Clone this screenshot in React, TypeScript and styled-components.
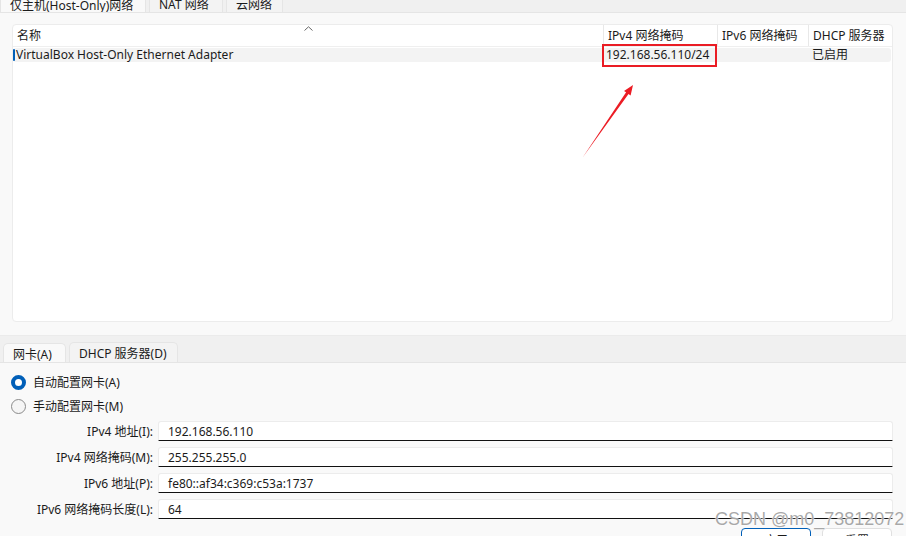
import React from "react";
import styled, { createGlobalStyle } from "styled-components";

const GlobalStyle = createGlobalStyle`
	html, body {
		margin: 0;
		padding: 0;
		background: #f0f0f0;
		overflow: hidden;
	}
`;

const UI_FONT = `"Noto Sans", "Noto Sans CJK SC", sans-serif`;
const ACCENT = "#005fb8";

const Window = styled.div`
	position: relative;
	width: 906px;
	height: 536px;
	display: flex;
	flex-direction: column;
	background: #f0f0f0;
	overflow: hidden;
	font-family: ${UI_FONT};
	font-size: 12px;
	color: #1b1b1b;
`;

const TabStrip = styled.div<{ $height: number; $pad: number }>`
	height: ${({ $height }) => $height}px;
	flex: 0 0 auto;
	display: flex;
	align-items: flex-end;
	gap: 3px;
	padding-left: ${({ $pad }) => $pad}px;
	overflow: hidden;
`;

const Tab = styled.div<{ $active?: boolean; $width: number; $height: number }>`
	box-sizing: border-box;
	width: ${({ $width }) => $width}px;
	height: ${({ $height }) => $height}px;
	display: flex;
	align-items: center;
	padding-left: 9px;
	white-space: nowrap;
	background: ${({ $active }) => ($active ? "#f9f9f9" : "#f3f3f3")};
	border: 1px solid #e5e5e5;
	border-bottom: none;
	border-radius: 5px 5px 0 0;
	margin-bottom: ${({ $active }) => ($active ? "-1px" : "0")};
	position: relative;
	z-index: ${({ $active }) => ($active ? 1 : 0)};
`;

const UpperPanel = styled.div`
	box-sizing: border-box;
	height: 324px;
	flex: 0 0 auto;
	padding: 11px 13px 13px 12px;
	background: #f9f9f9;
	border-top: 1px solid #e5e5e5;
	border-bottom: 1px solid #ebebeb;
`;

const ListBox = styled.div`
	box-sizing: border-box;
	height: 298px;
	background: #ffffff;
	border: 1px solid #ececec;
	border-radius: 4px;
	overflow: hidden;
`;

const COLS = "590px 114px 91px 1fr";

const HeaderRow = styled.div`
	display: grid;
	grid-template-columns: ${COLS};
	height: 21px;
	border-bottom: 1px solid #efefef;
`;

const HeaderCell = styled.div<{ $divider?: boolean }>`
	position: relative;
	display: flex;
	align-items: flex-end;
	padding: 0 0 2px 4px;
	border-left: ${({ $divider }) => ($divider ? "1px solid #e8e8e8" : "none")};
	white-space: nowrap;
`;

const SortArrow = styled.svg`
	position: absolute;
	top: 1px;
	left: 50%;
	margin-left: -4px;
`;

const DataRow = styled.div`
	position: relative;
	display: grid;
	grid-template-columns: ${COLS};
	height: 14px;
	margin: 1px 1px 0 0;
	background: #f3f3f3;
	border-radius: 3px;
	line-height: 14px;
`;

const RowMarker = styled.div`
	position: absolute;
	left: 0;
	top: 1px;
	width: 2px;
	height: 12px;
	border-radius: 1px;
	background: ${ACCENT};
`;

const DataCell = styled.div<{ $indent: number }>`
	padding-left: ${({ $indent }) => $indent}px;
	white-space: nowrap;
`;

const LowerPanel = styled.div`
	flex: 1 1 auto;
	box-sizing: border-box;
	padding: 7px 13px 0 11px;
	background: #f9f9f9;
	border-top: 1px solid #e5e5e5;
	display: flex;
	flex-direction: column;
`;

const RadioRow = styled.label`
	height: 24px;
	display: flex;
	align-items: center;
	gap: 7px;
`;

const RadioDot = styled.span<{ $checked?: boolean }>`
	box-sizing: border-box;
	width: 15px;
	height: 15px;
	border-radius: 50%;
	flex: 0 0 auto;
	background: ${({ $checked }) => ($checked ? "#ffffff" : "#f5f5f5")};
	border: ${({ $checked }) =>
		$checked ? `4px solid ${ACCENT}` : "1px solid #8a8a8a"};
`;

const Form = styled.div`
	margin-top: 3px;
	display: grid;
	grid-template-columns: 142px 1fr;
	column-gap: 5px;
	row-gap: 6px;
`;

const FieldLabel = styled.div`
	height: 20px;
	display: flex;
	align-items: center;
	justify-content: flex-end;
	white-space: nowrap;
`;

const FieldInput = styled.div`
	box-sizing: border-box;
	height: 20px;
	display: flex;
	align-items: center;
	padding-left: 9px;
	background: #ffffff;
	border: 1px solid #ececec;
	border-bottom: 1px solid #111111;
	border-radius: 3px 3px 0 0;
`;

const ButtonRow = styled.div`
	margin-top: 9px;
	display: flex;
	justify-content: flex-end;
	gap: 11px;
	padding-right: 1px;
`;

const Button = styled.div<{ $primary?: boolean }>`
	box-sizing: border-box;
	width: 70px;
	height: 24px;
	display: flex;
	align-items: center;
	justify-content: center;
	background: #ffffff;
	border: 1px solid ${({ $primary }) => ($primary ? ACCENT : "#e0e0e0")};
	border-radius: 4px;
`;

const Highlight = styled.div`
	position: absolute;
	left: 602px;
	top: 44px;
	width: 115px;
	height: 23px;
	box-sizing: border-box;
	border: 2px solid #ea1c24;
	pointer-events: none;
`;

const Arrow = styled.svg`
	position: absolute;
	left: 570px;
	top: 80px;
`;

const Watermark = styled.div`
	position: absolute;
	left: 715px;
	top: 509px;
	font-family: "Liberation Sans", Arial, sans-serif;
	font-size: 18px;
	color: rgba(140, 140, 140, 0.75);
	text-shadow: 0 0 1px #ffffff, 0 0 2px #ffffff;
	white-space: nowrap;
	pointer-events: none;
`;

const fields = [
	{ label: "IPv4 地址(I):", value: "192.168.56.110" },
	{ label: "IPv4 网络掩码(M):", value: "255.255.255.0" },
	{ label: "IPv6 地址(P):", value: "fe80::af34:c369:c53a:1737" },
	{ label: "IPv6 网络掩码长度(L):", value: "64" },
];

export default function App() {
	return (
		<Window>
			<GlobalStyle />
			<TabStrip $height={12} $pad={0}>
				<Tab $active $width={146} $height={18}>
					仅主机(Host-Only)网络
				</Tab>
				<Tab $width={74} $height={18}>
					NAT 网络
				</Tab>
				<Tab $width={57} $height={18}>
					云网络
				</Tab>
			</TabStrip>

			<UpperPanel>
				<ListBox>
					<HeaderRow>
						<HeaderCell>
							名称
							<SortArrow width="9" height="5" viewBox="0 0 9 5">
								<path d="M0.5 4.5 L4.5 0.8 L8.5 4.5" fill="none" stroke="#666" strokeWidth="1" />
							</SortArrow>
						</HeaderCell>
						<HeaderCell $divider>IPv4 网络掩码</HeaderCell>
						<HeaderCell $divider>IPv6 网络掩码</HeaderCell>
						<HeaderCell $divider>DHCP 服务器</HeaderCell>
					</HeaderRow>
					<DataRow>
						<RowMarker />
						<DataCell $indent={3}>VirtualBox Host-Only Ethernet Adapter</DataCell>
						<DataCell $indent={3}>192.168.56.110/24</DataCell>
						<DataCell $indent={3}></DataCell>
						<DataCell $indent={4}>已启用</DataCell>
					</DataRow>
				</ListBox>
			</UpperPanel>

			<TabStrip $height={26} $pad={3}>
				<Tab $active $width={63} $height={20}>
					网卡(A)
				</Tab>
				<Tab $width={109} $height={20}>
					DHCP 服务器(D)
				</Tab>
			</TabStrip>

			<LowerPanel>
				<RadioRow>
					<RadioDot $checked />
					自动配置网卡(A)
				</RadioRow>
				<RadioRow>
					<RadioDot />
					手动配置网卡(M)
				</RadioRow>
				<Form>
					{fields.map((f) => (
						<React.Fragment key={f.label}>
							<FieldLabel>{f.label}</FieldLabel>
							<FieldInput>{f.value}</FieldInput>
						</React.Fragment>
					))}
				</Form>
				<ButtonRow>
					<Button $primary>应用</Button>
					<Button>重置</Button>
				</ButtonRow>
			</LowerPanel>

			<Highlight />
			<Arrow width="70" height="80" viewBox="0 0 70 80">
				<polygon
					points="13,77 58.5,14.1 60.6,15.5 63,5 54,10.9 56.1,12.3"
					fill="#ec1c24"
				/>
			</Arrow>
			<Watermark>CSDN @m0_73812072</Watermark>
		</Window>
	);
}
